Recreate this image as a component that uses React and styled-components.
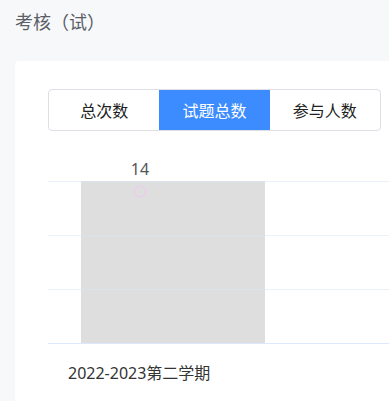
import React from "react";
import styled, { createGlobalStyle } from "styled-components";

const Global = createGlobalStyle`
  html, body { margin: 0; padding: 0; }
  body {
    background: #f7f8fa;
    font-family: "Noto Sans", "Noto Sans CJK SC", sans-serif;
    overflow: hidden;
  }
`;

const Page = styled.div`
  width: 389px;
  height: 401px;
  overflow: hidden;
  padding: 8px 0 0 15px;
  box-sizing: border-box;
`;

const Title = styled.div`
  font-size: 18px;
  line-height: 26px;
  color: #5a5e66;
  font-family: "Noto Sans CJK SC", sans-serif;
`;

const Card = styled.div`
  margin-top: 27px;
  width: 420px;
  height: 360px;
  background: #fff;
  border-radius: 4px;
  padding: 28px 0 0 33px;
  box-sizing: border-box;
`;

const Tabs = styled.div`
  display: flex;
  width: 333px;
  height: 42px;
  border: 1px solid #dcdfe6;
  border-radius: 4px;
  box-sizing: border-box;
  overflow: hidden;
`;

const Tab = styled.div`
  flex: 1;
  display: flex;
  align-items: center;
  justify-content: center;
  font-size: 16px;
  font-family: "Noto Sans CJK SC", sans-serif;
  color: ${(p) => (p.$active ? "#fff" : "#222")};
  background: ${(p) => (p.$active ? "#3c8bff" : "transparent")};
`;

const Chart = styled.svg`
  display: block;
  margin-top: 14px;
  overflow: visible;
`;

const tabs = ["总次数", "试题总数", "参与人数"];

export default function App() {
  return (
    <>
      <Global />
      <Page>
        <Title>考核（试）</Title>
        <Card>
          <Tabs>
            {tabs.map((t) => (
              <Tab key={t} $active={t === "试题总数"}>
                {t}
              </Tab>
            ))}
          </Tabs>
          <Chart width="360" height="245" viewBox="0 0 360 245">
            <rect x="33" y="36" width="184" height="162" fill="#dedede" />
            {[36, 90, 144].map((y) => (
              <line key={y} x1="0" x2="360" y1={y + 0.5} y2={y + 0.5} stroke="#d8e4fa" strokeOpacity="0.55" />
            ))}
            <line x1="0" x2="360" y1="198.5" y2="198.5" stroke="#dde8fa" />
            <circle cx="92" cy="46.5" r="5.5" fill="none" stroke="#eccbec" strokeWidth="1.2" />
            <text x="92" y="30" textAnchor="middle" fontSize="16" fill="#555" fontFamily="Noto Sans, sans-serif">14</text>
            <text x="20" y="234" fontSize="16" fill="#333" fontFamily="Noto Sans, Noto Sans CJK SC, sans-serif">2022-2023第二学期</text>
          </Chart>
        </Card>
      </Page>
    </>
  );
}
